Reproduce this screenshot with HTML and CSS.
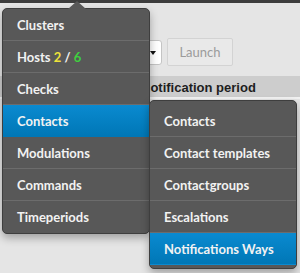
FILE: index.html
```html
<!DOCTYPE html>
<html>
<head>
<meta charset="utf-8">
<link rel="stylesheet" href="styles.css">
</head>
<body>
<div class="topbar"></div>
<div class="toolbar">
  <div class="select"><span class="caret"></span></div>
  <div class="btn">Launch</div>
</div>
<div class="thead"><span class="th">Notification period</span></div>
<div class="tbody"></div>

<ul class="menu main">
  <li class="item">Clusters</li>
  <li class="item">Hosts <span class="y">2</span> / <span class="g">6</span></li>
  <li class="item">Checks</li>
  <li class="item active">Contacts</li>
  <li class="item">Modulations</li>
  <li class="item">Commands</li>
  <li class="item last">Timeperiods</li>
</ul>
<ul class="menu sub">
  <li class="item">Contacts</li>
  <li class="item">Contact templates</li>
  <li class="item">Contactgroups</li>
  <li class="item">Escalations</li>
  <li class="item active last">Notifications Ways</li>
</ul>
</body>
</html>
```
FILE: styles.css
```css
html, body {
  margin: 0;
  padding: 0;
}
body {
  width: 300px;
  height: 273px;
  overflow: hidden;
  background: #e5e5e5;
  font-family: Lato, "Liberation Sans", sans-serif;
  position: relative;
}
.topbar {
  height: 3px;
  background: #3d3d3d;
}
.toolbar {
  display: flex;
  align-items: center;
  gap: 5px;
  margin-top: 35px;
  padding-left: 102px;
  height: 28px;
}
.select {
  position: relative;
  width: 58px;
  height: 23px;
  background: #fff;
  border: 1px solid #c4c4c4;
  border-radius: 3px;
}
.caret {
  position: absolute;
  right: 5px;
  top: 10px;
  width: 0;
  height: 0;
  border-left: 3px solid transparent;
  border-right: 3px solid transparent;
  border-top: 4px solid #111;
}
.btn {
  width: 64px;
  height: 26px;
  box-sizing: content-box;
  border: 1px solid #d3d3d3;
  border-radius: 2px;
  background: #e9e9e9;
  color: #9b9b9b;
  font-size: 13px;
  line-height: 27px;
  text-align: center;
}
.thead {
  margin-top: 10px;
  height: 21px;
  background: #cdcdcd;
  border-bottom: 2px solid #f2f2f2;
  padding-left: 141px;
}
.th {
  font-family: "Liberation Sans", Arial, sans-serif;
  font-weight: 700;
  font-size: 13px;
  color: #1e1e1e;
  line-height: 22px;
}
.menu {
  position: absolute;
  margin: 0;
  list-style: none;
  background: #585858;
  border: 1px solid #3e3e3e;
  border-radius: 5px;
  box-shadow: 0 4px 9px rgba(0, 0, 0, 0.3);
  color: #f2f2f2;
  font-weight: 700;
  font-size: 13px;
}
.main {
  left: 2px;
  top: 8px;
  width: 146px;
  padding: 0;
}
.main::before {
  content: "";
  position: absolute;
  left: 65px;
  top: -8px;
  border-left: 9px solid transparent;
  border-right: 9px solid transparent;
  border-bottom: 8px solid #585858;
}
.sub {
  left: 149px;
  top: 100px;
  width: 146px;
  padding: 4px 0 3px;
}
.item {
  display: block;
  height: 32px;
  box-sizing: border-box;
  padding: 2px 14px 0;
  line-height: 29px;
  border-bottom: 1px solid #6c6c6c;
  white-space: nowrap;
}
.item.last {
  border-bottom-color: transparent;
}
.active {
  background: linear-gradient(#0a8ad0, #0077b6);
  border-bottom-color: #0077b6;
}
.y { color: #eee23a; }
.g { color: #3fd13f; }
```
